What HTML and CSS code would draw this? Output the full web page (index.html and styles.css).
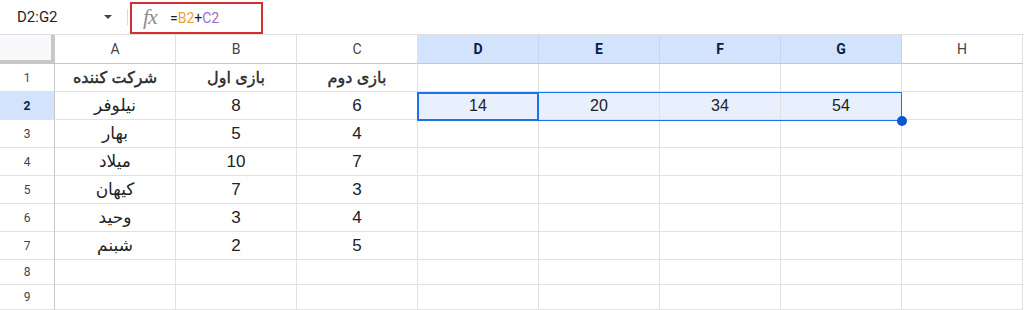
FILE: index.html
```html
<!DOCTYPE html>
<html lang="fa">
<head>
    <meta charset="UTF-8">
    <title>Sheet</title>
    <link rel="stylesheet" href="styles.css">
</head>
<body>
    <div class="toolbar">
        <div class="name-box">
            <span class="range">D2:G2</span>
            <span class="caret"></span>
        </div>
        <div class="divider"></div>
        <div class="formula">
            <span class="fx">fx</span>
            <span class="expr">=<span class="ref-b">B2</span>+<span class="ref-c">C2</span></span>
        </div>
    </div>

    <div class="sheet">
        <div class="corner"></div>
        <div class="col-head">A</div>
        <div class="col-head">B</div>
        <div class="col-head">C</div>
        <div class="col-head active">D</div>
        <div class="col-head active">E</div>
        <div class="col-head active">F</div>
        <div class="col-head active">G</div>
        <div class="col-head">H</div>

        <div class="row-head">1</div>
        <div class="cell title">شرکت کننده</div>
        <div class="cell title">بازی اول</div>
        <div class="cell title">بازی دوم</div>
        <div class="cell"></div><div class="cell"></div><div class="cell"></div><div class="cell"></div><div class="cell"></div>

        <div class="row-head active">2</div>
        <div class="cell">نیلوفر</div>
        <div class="cell">8</div>
        <div class="cell">6</div>
        <div class="cell sel">14</div>
        <div class="cell sel">20</div>
        <div class="cell sel">34</div>
        <div class="cell sel">54</div>
        <div class="cell"></div>

        <div class="row-head">3</div>
        <div class="cell">بهار</div>
        <div class="cell">5</div>
        <div class="cell">4</div>
        <div class="cell"></div><div class="cell"></div><div class="cell"></div><div class="cell"></div><div class="cell"></div>

        <div class="row-head">4</div>
        <div class="cell">میلاد</div>
        <div class="cell">10</div>
        <div class="cell">7</div>
        <div class="cell"></div><div class="cell"></div><div class="cell"></div><div class="cell"></div><div class="cell"></div>

        <div class="row-head">5</div>
        <div class="cell">کیهان</div>
        <div class="cell">7</div>
        <div class="cell">3</div>
        <div class="cell"></div><div class="cell"></div><div class="cell"></div><div class="cell"></div><div class="cell"></div>

        <div class="row-head">6</div>
        <div class="cell">وحید</div>
        <div class="cell">3</div>
        <div class="cell">4</div>
        <div class="cell"></div><div class="cell"></div><div class="cell"></div><div class="cell"></div><div class="cell"></div>

        <div class="row-head">7</div>
        <div class="cell">شبنم</div>
        <div class="cell">2</div>
        <div class="cell">5</div>
        <div class="cell"></div><div class="cell"></div><div class="cell"></div><div class="cell"></div><div class="cell"></div>

        <div class="row-head">8</div>
        <div class="cell"></div><div class="cell"></div><div class="cell"></div><div class="cell"></div>
        <div class="cell"></div><div class="cell"></div><div class="cell"></div><div class="cell"></div>

        <div class="row-head">9</div>
        <div class="cell"></div><div class="cell"></div><div class="cell"></div><div class="cell"></div>
        <div class="cell"></div><div class="cell"></div><div class="cell"></div><div class="cell"></div>

        <!-- selection outline over D2:G2 -->
        <div class="selection">
            <div class="active-cell"></div>
            <div class="handle"></div>
        </div>
    </div>
</body>
</html>
```

FILE: styles.css
```css
body {
    margin: 0;
    background: #fff;
    font-family: Roboto, "DejaVu Sans", sans-serif;
    color: #1f1f1f;
    overflow: hidden;
}

/* formula bar */
.toolbar {
    display: flex;
    align-items: center;
    height: 34px;
}
.name-box {
    display: flex;
    align-items: center;
    width: 127px;
    box-sizing: border-box;
    padding-left: 17px;
}
.range {
    font-size: 15px;
    color: #1f1f1f;
    width: 87px;
}
.caret {
    width: 0;
    height: 0;
    border-left: 4px solid transparent;
    border-right: 4px solid transparent;
    border-top: 4px solid #444;
}
.divider {
    width: 1px;
    height: 16px;
    background: #dadce0;
}
.formula {
    display: flex;
    align-items: center;
    width: 133px;
    height: 32px;
    box-sizing: border-box;
    margin-left: 2px;
    margin-top: 2px;
    border: 2px solid #d32f2f;
    padding-left: 11px;
}
.fx {
    font-family: "Liberation Serif", serif;
    font-style: italic;
    font-size: 22px;
    color: #8e8e8e;
    letter-spacing: -1px;
    width: 27px;
    margin-top: -3px;
}
.expr {
    font-size: 14px;
    color: #1f1f1f;
}
.ref-b { color: #e8a33d; }
.ref-c { color: #9d6ac8; }

/* grid */
.sheet {
    position: relative;
    display: grid;
    grid-template-columns: 55px repeat(8, 121px);
    grid-template-rows: 29px repeat(7, 28px) 25px 25px;
    border-top: 1px solid #e0e0e0;
}
.corner {
    background: #f8f9fa;
    border-right: 4px solid #c7c7c7;
    border-bottom: 4px solid #c7c7c7;
}
.col-head {
    display: flex;
    align-items: center;
    justify-content: center;
    font-size: 14px;
    color: #444;
    border-right: 1px solid #e1e1e1;
    border-bottom: 1px solid #c7c7c7;
}
.col-head.active {
    background: #d3e3fd;
    color: #041e49;
    font-weight: bold;
    border-right-color: #c6d4ec;
}
.row-head {
    display: flex;
    align-items: center;
    justify-content: center;
    font-size: 12px;
    color: #444;
    border-right: 1px solid #c7c7c7;
    border-bottom: 1px solid #e1e1e1;
}
.row-head.active {
    background: #d3e3fd;
    color: #041e49;
    font-weight: bold;
}
.cell {
    display: flex;
    align-items: center;
    justify-content: center;
    font-family: "Liberation Sans", "DejaVu Sans", sans-serif;
    font-size: 17px;
    color: #222;
    border-right: 1px solid #e1e1e1;
    border-bottom: 1px solid #e1e1e1;
}
.cell.title {
    font-size: 16px;
    color: #2a2a2a;
    -webkit-text-stroke: 0.4px #2a2a2a;
}
.cell.sel {
    background: #e8f0fe;
    font-size: 16px;
}

.selection {
    position: absolute;
    left: 417px;
    top: 57px;
    width: 485px;
    height: 29px;
    box-sizing: border-box;
    border: 1px solid #1a73e8;
}
.active-cell {
    position: absolute;
    left: -1px;
    top: -1px;
    width: 122px;
    height: 29px;
    box-sizing: border-box;
    border: 2px solid #1a73e8;
}
.handle {
    position: absolute;
    right: -6px;
    bottom: -6px;
    width: 10px;
    height: 10px;
    border-radius: 50%;
    background: #0b57d0;
}
```
